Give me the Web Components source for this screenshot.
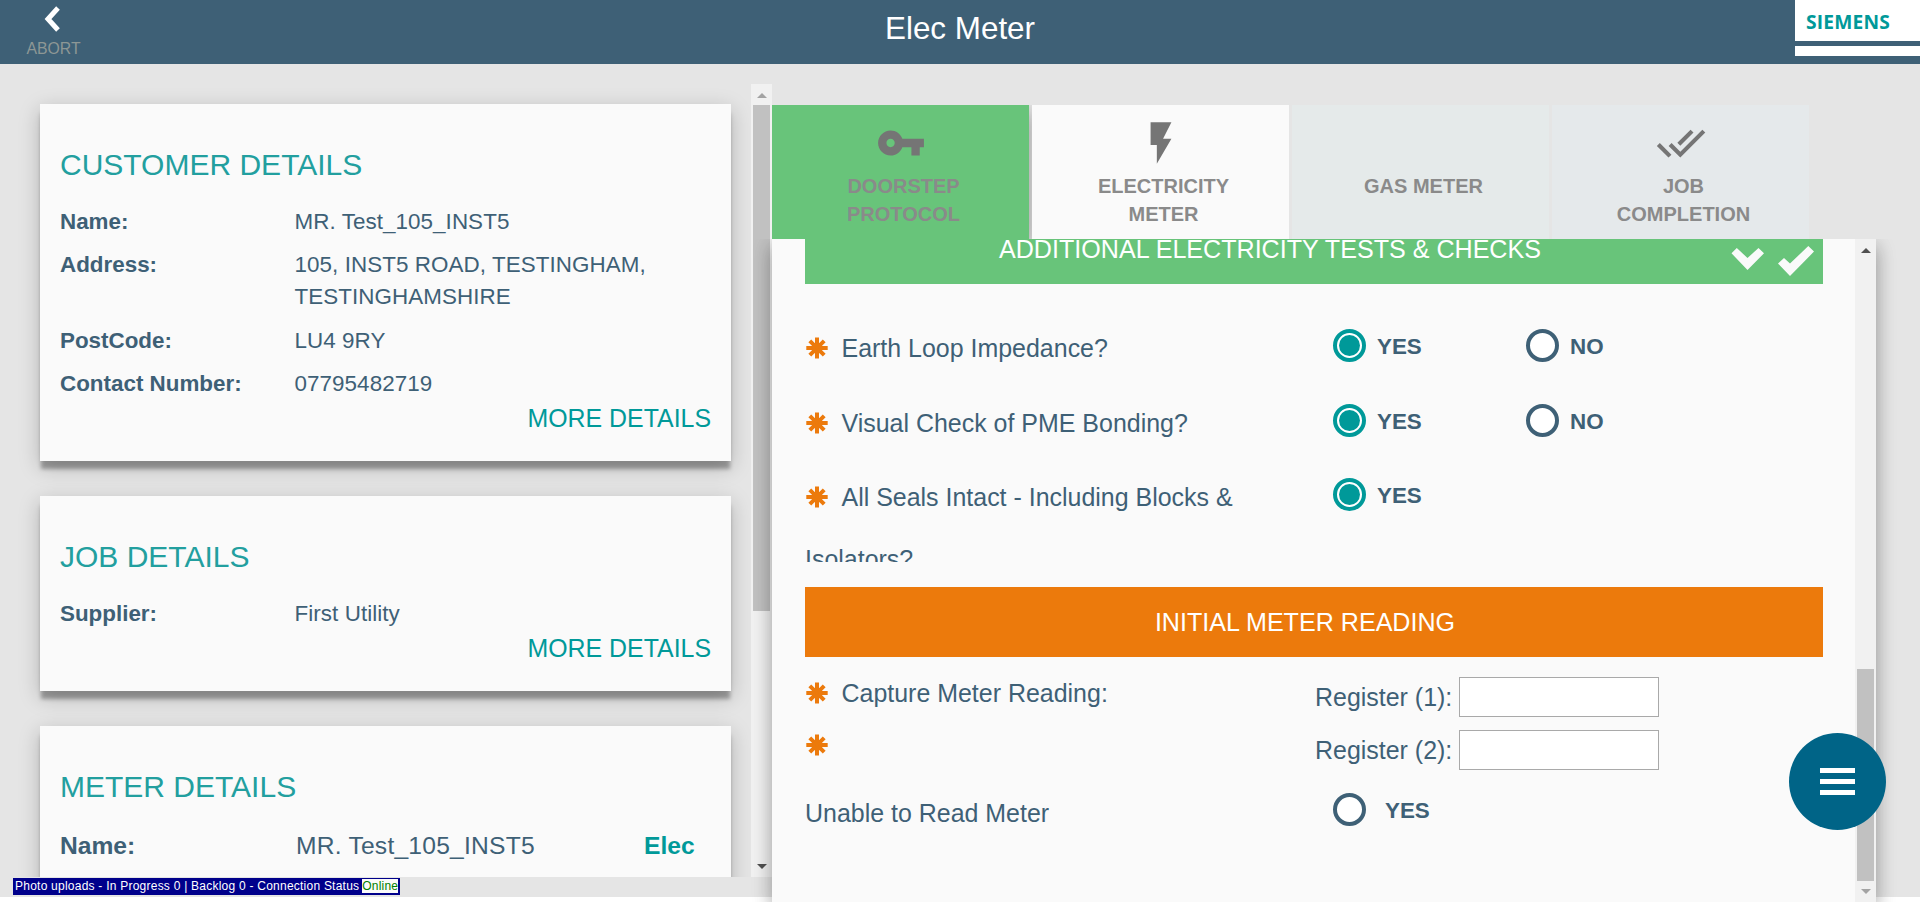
<!DOCTYPE html>
<html lang="en">
<head>
<meta charset="utf-8">
<title>Elec Meter</title>
<style>
html,body{margin:0;height:100%;background:#fff;overflow:hidden;font-family:"Liberation Sans",Arial,sans-serif;color:#3e6076}
</style>
</head>
<body>
<meter-app></meter-app>
<script>
const define = (name, html) => customElements.define(name, class extends HTMLElement {
  constructor() {
    super();
    const t = document.createElement('template');
    t.innerHTML = html;
    this.attachShadow({mode: 'open'}).append(t.content.cloneNode(true));
  }
});

define('siemens-logo', `
<style>
:host{display:block;width:125px;height:56px;background:#fff}
.name{height:41px;box-sizing:border-box;padding:10px 0 0 11px;font:bold 19.2px/24px "Open Sans",sans-serif;letter-spacing:.2px;color:#099;white-space:nowrap}
.bar{height:5px;background:#3e6076}
</style>
<div class="name"><slot></slot></div><div class="bar"></div>`);

define('app-header', `
<style>
:host{display:grid;grid-template-columns:1fr auto 1fr;height:64px;background:#3e6076;color:#fff}
.abort{width:53px;margin-left:27px;padding-top:6px;display:flex;flex-direction:column;align-items:center;font-size:15.8px;line-height:18px;color:#8d9795}
.abort svg{display:block;margin:0 4px 8px 0}
h1{margin:4px 0 0;font-size:31.4px;line-height:50px;font-weight:400}
siemens-logo{justify-self:end}
</style>
<div class="abort"><svg width="16" height="26" viewBox="0 0 16 26"><path d="M14 2 4 13l10 11" fill="none" stroke="#fff" stroke-width="5"/></svg>ABORT</div>
<h1><slot></slot></h1>
<siemens-logo>SIEMENS</siemens-logo>`);

define('detail-row', `
<style>
:host{display:grid;grid-template-columns:234.5px auto 1fr;font-size:22.4px;line-height:32px}
:host([large]){font-size:24.64px;line-height:36px;grid-template-columns:236px 348px 1fr}
b{white-space:nowrap}
.value{letter-spacing:.07px}
:host([large]) .value{letter-spacing:.22px}
.side{color:#099;font-weight:bold}
</style>
<b><slot name="label"></slot></b><span class="value"><slot></slot></span><span class="side"><slot name="side"></slot></span>`);

define('detail-card', `
<style>
:host{display:block;box-sizing:border-box;padding:41px 20px 25px;background:#fafafa;box-shadow:0 9px 4px -1px rgba(0,0,0,.31),0 6px 20px rgba(0,0,0,.22)}
h2{margin:0 0 21px;font-size:30px;line-height:40px;font-weight:400;color:#229f9f}
.rows{display:flex;flex-direction:column;gap:11.3px}
.more{font-size:24.9px;line-height:36px;text-align:right;color:#099}
:host([open]) .more{display:none}
</style>
<h2><slot name="title"></slot></h2><div class="rows"><slot></slot></div><div class="more">MORE DETAILS</div>`);

define('scroll-rail', `
<style>
:host{display:flex;flex-direction:column;align-items:center;width:21px;background:#f1f1f1}
.cap{height:21px;flex:none;display:flex;align-items:center}
.cap:first-of-type{padding-top:1px;height:20px}
.lead{flex:var(--lead,0) 0 0}
.thumb{width:17px;background:#c1c1c1;flex:var(--thumb) 0 0}
.rest{flex:var(--rest,0) 0 0}
svg{display:block}
</style>
<div class="cap"><svg width="10" height="5"><path d="M0 5 5 0l5 5z" fill="var(--up)"/></svg></div>
<div class="lead"></div><div class="thumb"></div><div class="rest"></div>
<div class="cap"><svg width="10" height="5"><path d="M0 0h10L5 5z" fill="var(--down)"/></svg></div>`);

define('step-tab', `
<style>
:host{display:block;box-sizing:border-box;width:257px;height:134px;padding-top:13px;text-align:center}
.icon{height:50px;display:flex;justify-content:center}
.text{margin-top:4px;padding-left:6px;font-size:20px;line-height:28px;font-weight:bold;color:#8a8a8a}
</style>
<div class="icon"><slot name="icon"></slot></div><div class="text"><slot></slot></div>`);

define('must-mark', `
<style>
:host{display:block;width:22px;height:22px}
svg{display:block}
</style>
<svg width="22" height="22" viewBox="-11 -11 22 22" stroke="#ec7a0c" stroke-width="4"><path d="M0-10.5V10.5M-10.7 0H10.7M-7.2-7.2 7.2 7.2M-7.2 7.2 7.2-7.2"/><circle r="3.5" fill="#ec7a0c"/></svg>`);

define('radio-choice', `
<style>
:host{display:flex;align-items:flex-start;font-size:22.4px;line-height:32px;font-weight:bold;gap:var(--gap,11px)}
.ring{box-sizing:border-box;width:33px;height:33px;border:4px solid #3e6076;border-radius:50%;background:#fff;display:grid;place-items:center;flex:none}
.dot{display:none;width:21px;height:21px;border-radius:50%;background:#099}
:host([checked]) .ring{border-color:#099}
:host([checked]) .dot{display:block}
.text{padding-top:2px}
</style>
<span class="ring"><span class="dot"></span></span><span class="text"><slot></slot></span>`);

define('check-row', `
<style>
:host{display:grid;grid-template-columns:528px 193px 1fr;height:74.5px;font-size:24.96px;line-height:62px;align-items:start}
.q{width:500px}
must-mark{display:inline-block;vertical-align:-2px;margin:0 13.5px 0 1px}
.c{padding-top:12px}
</style>
<div class="q"><must-mark></must-mark><slot></slot></div><div class="c"><slot name="yes"></slot></div><div class="c"><slot name="no"></slot></div>`);

define('reading-form', `
<style>
:host{display:grid;grid-template-columns:510px 1fr;font-size:24.96px;line-height:40px;padding-top:20px}
.marks{display:flex;flex-direction:column;gap:30px;padding-top:5px}
.line{display:flex;align-items:center;gap:13.5px;height:22px;padding-left:1px;white-space:nowrap}
.regs{display:flex;flex-direction:column;gap:13px;height:96px}
label{display:flex;height:40px;gap:7px}
input{box-sizing:border-box;width:200px;height:40px;border:1px solid #a9a9a9;margin:0;padding:0;background:#fff;outline:0}
.unable{padding-top:20px}
.pick{padding:20px 0 0 18px;--gap:19px}
</style>
<div class="marks"><div class="line"><must-mark></must-mark><span>Capture Meter Reading:</span></div><div class="line"><must-mark></must-mark></div></div>
<div class="regs"><label>Register (1): <input></label><label>Register (2): <input></label></div>
<div class="unable">Unable to Read Meter</div>
<div class="pick"><radio-choice>YES</radio-choice></div>`);

define('section-bar', `
<style>
:host{display:grid;box-sizing:border-box;grid-template-columns:1fr;align-items:center;justify-items:center;height:70px;padding-right:18px;background:#ec7a0c;color:#fff;font-size:25.1px;line-height:40px}
:host([done]){background:#68c47a;margin-top:-25px;padding-right:0;grid-template-columns:922px 1fr}
.icons{display:none}
:host([done]) .icons{display:flex;gap:13px;align-items:flex-start;align-self:start;justify-self:end;padding:32px 9px 0 0}
:host([done]) .t{padding-left:8px}
svg{display:block}
</style>
<span class="t"><slot></slot></span>
<span class="icons"><svg width="34" height="24" viewBox="0 0 34 24"><path d="M.5 7.3 5.8 2l10.7 10L27.5 2 33 7.3 16.5 24z" fill="#fafafa"/></svg><svg width="36" height="30" viewBox="0 0 36 30"><path d="M30.3 0 36 5.6 12 30 0 17.6 6 12l6 5.6z" fill="#fafafa"/></svg></span>`);

define('status-strip', `
<style>
:host{display:inline-flex;box-sizing:border-box;height:17px;padding:1px 2px 2px;background:#00008b;color:#fff;font-size:12px;line-height:14px;white-space:pre}
span{letter-spacing:.235px}
i{font-style:normal;letter-spacing:.2px;background:#fafafa;color:#008000;margin-left:3px}
</style>
<span>Photo uploads - In Progress 0 | Backlog 0 - Connection Status</span><i>Online</i>`);

define('menu-fab', `
<style>
:host{display:flex;flex-direction:column;align-items:center;justify-content:center;gap:6px;width:97px;height:97px;border-radius:50%;background:#006487}
span{width:35px;height:5px;background:#fff}
</style>
<span></span><span></span><span></span>`);

define('meter-app', `
<style>
:host{display:flex;flex-direction:column;width:1920px;height:902px;position:relative;overflow:hidden;background:linear-gradient(#e5e5e5 897px,#fff 897px)}
.main{display:grid;grid-template-columns:772px 1104px;height:838px}
.left{display:flex;flex-direction:column;padding-top:20px;min-height:0}
.scroll{display:flex;height:793px;overflow:hidden}
.cards{display:flex;flex-direction:column;gap:35px;width:691px;padding:20px 20px 0 40px}
detail-card{flex:none}
.scroll scroll-rail{--thumb:506;--rest:245;--up:#a3a3a3;--down:#505050}
.left status-strip{align-self:flex-start;margin:1px 0 0 13px}
.right{display:flex;flex-direction:column;padding-top:41px}
.tabs{display:flex;gap:3px;height:134px;flex:none}
.panel{flex:1;display:flex;min-height:0;background:#fafafa;box-shadow:0 8px 17px rgba(0,0,0,.2),0 6px 20px rgba(0,0,0,.19);clip-path:inset(0 -44px 0 -40px)}
.body{width:1018px;padding:0 32px 0 33px;display:flex;flex-direction:column;overflow:hidden;flex:none}
.panel scroll-rail{--lead:409;--thumb:212;--up:#505050;--down:#a3a3a3}
.checks{height:245px;padding-top:33px;overflow:hidden;flex:none;margin-bottom:25px}
section-bar{flex:none}
menu-fab{position:absolute;left:1788.5px;top:732.5px}
</style>
<app-header>Elec Meter</app-header>
<div class="main">
 <div class="left">
  <div class="scroll">
   <div class="cards">
    <detail-card><span slot="title">CUSTOMER DETAILS</span>
     <detail-row><span slot="label">Name:</span>MR. Test_105_INST5</detail-row>
     <detail-row><span slot="label">Address:</span>105, INST5 ROAD, TESTINGHAM,<br>TESTINGHAMSHIRE</detail-row>
     <detail-row><span slot="label">PostCode:</span>LU4 9RY</detail-row>
     <detail-row><span slot="label">Contact Number:</span>07795482719</detail-row>
    </detail-card>
    <detail-card><span slot="title">JOB DETAILS</span>
     <detail-row><span slot="label">Supplier:</span>First Utility</detail-row>
    </detail-card>
    <detail-card open><span slot="title">METER DETAILS</span>
     <detail-row large><span slot="label">Name:</span>MR. Test_105_INST5<span slot="side">Elec</span></detail-row>
     <detail-row large>&nbsp;</detail-row>
    </detail-card>
   </div>
   <scroll-rail></scroll-rail>
  </div>
  <status-strip></status-strip>
 </div>
 <div class="right">
  <div class="tabs">
   <step-tab style="background:#68c47a;box-shadow:0 8px 17px rgba(0,0,0,.2),0 6px 20px rgba(0,0,0,.19);clip-path:inset(0 -3px 0 0)"><svg slot="icon" width="50" height="50" viewBox="0 0 24 24"><path fill="#757575" d="M12.65 10C11.83 7.67 9.61 6 7 6c-3.31 0-6 2.69-6 6s2.69 6 6 6c2.61 0 4.83-1.67 5.65-4H17v4h4v-4h2v-4H12.65zM7 14c-1.1 0-2-.9-2-2s.9-2 2-2 2 .9 2 2-.9 2-2 2z"/></svg>DOORSTEP<br>PROTOCOL</step-tab>
   <step-tab style="background:#fafafa"><svg slot="icon" width="50" height="50" viewBox="0 0 24 24"><path fill="#757575" d="M7 2v11h3v9l7-12h-4l4-8z"/></svg>ELECTRICITY<br>METER</step-tab>
   <step-tab style="background:#e5eaea">GAS METER</step-tab>
   <step-tab style="background:#e5e9eb"><svg slot="icon" width="50" height="50" viewBox="0 0 24 24"><path fill="#757575" d="M18 7l-1.41-1.41-6.34 6.34 1.41 1.41L18 7zm4.24-1.41L11.66 16.17 7.48 12l-1.41 1.41L11.66 19l12-12-1.42-1.41zM.41 13.41L6 19l1.41-1.41L1.83 12 .41 13.41z"/></svg>JOB<br>COMPLETION</step-tab>
  </div>
  <div class="panel">
   <div class="body">
    <section-bar done>ADDITIONAL ELECTRICITY TESTS &amp; CHECKS</section-bar>
    <div class="checks">
     <check-row>Earth Loop Impedance?<radio-choice slot="yes" checked>YES</radio-choice><radio-choice slot="no">NO</radio-choice></check-row>
     <check-row>Visual Check of PME Bonding?<radio-choice slot="yes" checked>YES</radio-choice><radio-choice slot="no">NO</radio-choice></check-row>
     <check-row>All Seals Intact - Including Blocks &amp; Isolators?<radio-choice slot="yes" checked>YES</radio-choice></check-row>
    </div>
    <section-bar>INITIAL METER READING</section-bar>
    <reading-form></reading-form>
   </div>
   <scroll-rail></scroll-rail>
  </div>
 </div>
</div>
<menu-fab></menu-fab>`);
</script>
</body>
</html>
